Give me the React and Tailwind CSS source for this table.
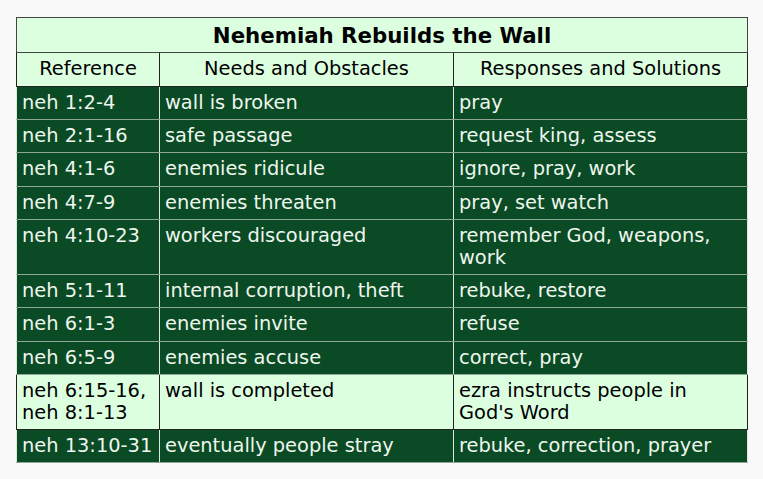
import React from "react";

const rows = [
  { ref: "neh 1:2-4", need: "wall is broken", resp: "pray" },
  { ref: "neh 2:1-16", need: "safe passage", resp: "request king, assess" },
  { ref: "neh 4:1-6", need: "enemies ridicule", resp: "ignore, pray, work" },
  { ref: "neh 4:7-9", need: "enemies threaten", resp: "pray, set watch" },
  { ref: "neh 4:10-23", need: "workers discouraged", resp: "remember God, weapons, work" },
  { ref: "neh 5:1-11", need: "internal corruption, theft", resp: "rebuke, restore" },
  { ref: "neh 6:1-3", need: "enemies invite", resp: "refuse" },
  { ref: "neh 6:5-9", need: "enemies accuse", resp: "correct, pray" },
  { ref: "neh 6:15-16, neh 8:1-13", need: "wall is completed", resp: "ezra instructs people in God's Word", light: true },
  { ref: "neh 13:10-31", need: "eventually people stray", resp: "rebuke, correction, prayer" },
];

function App() {
  return (
    <div
      className="min-h-screen bg-[#f8f9f8] pt-[17px] pl-4"
      style={{ fontFamily: '"DejaVu Sans", sans-serif' }}
    >
      <table className="w-[731px] table-fixed border-collapse text-[19.4px] leading-[22.2px]">
        <colgroup>
          <col className="w-[143px]" />
          <col className="w-[294px]" />
          <col className="w-[294px]" />
        </colgroup>
        <thead>
          <tr className="bg-[#dcffe0]">
            <th
              colSpan={3}
              className="border border-[#444] h-[35px] py-[4px] text-center text-[21.3px] leading-[25px] font-bold text-black"
            >
              Nehemiah Rebuilds the Wall
            </th>
          </tr>
          <tr className="bg-[#dcffe0]">
            {["Reference", "Needs and Obstacles", "Responses and Solutions"].map((h) => (
              <th
                key={h}
                className="border border-[#222] h-[34px] py-[5px] text-center font-normal text-black"
              >
                {h}
              </th>
            ))}
          </tr>
        </thead>
        <tbody>
          {rows.map((r) =>
            r.light ? (
              <tr key={r.ref} className="bg-[#dcffe0] text-black">
                <td className="border border-[#222] align-top px-[5px] pt-[5px] pb-[5px]">{r.ref}</td>
                <td className="border border-[#222] align-top px-[5px] pt-[5px] pb-[5px]">{r.need}</td>
                <td className="border border-[#222] align-top px-[5px] pt-[5px] pb-[5px]">{r.resp}</td>
              </tr>
            ) : (
              <tr key={r.ref} className="bg-[#0a4a25] text-[#eef6ee]">
                <td className="border-y border-y-[#8fa596] border-x border-x-[#dfe8df] align-top px-[5px] pt-[5px] pb-[5px]">{r.ref}</td>
                <td className="border-y border-y-[#8fa596] border-x border-x-[#dfe8df] align-top px-[5px] pt-[5px] pb-[5px]">{r.need}</td>
                <td className="border-y border-y-[#8fa596] border-x border-x-[#dfe8df] align-top px-[5px] pt-[5px] pb-[5px]">{r.resp}</td>
              </tr>
            )
          )}
        </tbody>
      </table>
    </div>
  );
}

export default App;
